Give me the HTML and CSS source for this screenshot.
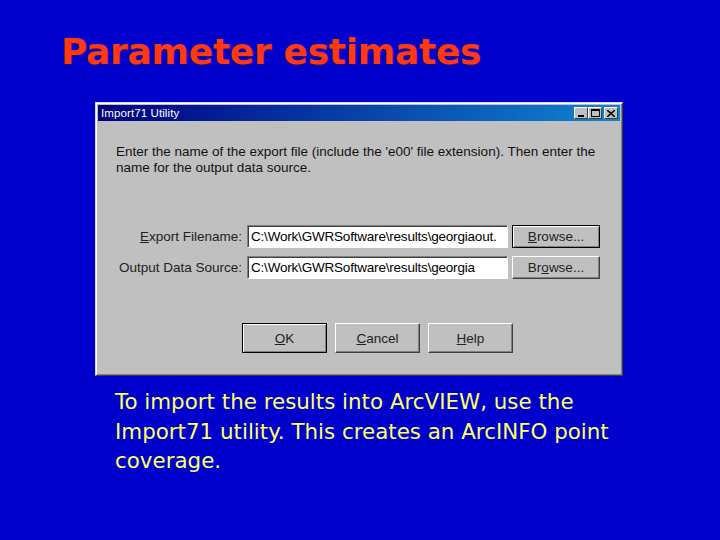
FILE: index.html
```html
<!DOCTYPE html>
<html lang="en">
<head>
    <meta charset="UTF-8">
    <title>Parameter estimates</title>
    <link rel="stylesheet" href="styles.css">
</head>
<body>
<div class="slide">
    <h1 class="slide-title">Parameter estimates</h1>

    <!-- Import71 dialog screenshot -->
    <div class="window">
        <div class="titlebar">
            <span class="titlebar-text">Import71 Utility</span>
            <div class="titlebar-buttons">
                <span class="tb-btn"><svg width="8" height="7" viewBox="0 0 8 7"><rect x="1" y="5" width="6" height="2" fill="#000"/></svg></span>
                <span class="tb-btn"><svg width="9" height="8" viewBox="0 0 9 8"><rect x="0.5" y="0.5" width="8" height="7" fill="none" stroke="#000"/><rect x="0" y="0" width="9" height="2" fill="#000"/></svg></span>
                <span class="tb-btn tb-close"><svg width="8" height="7" viewBox="0 0 8 7"><path d="M0 0 L8 7 M8 0 L0 7" stroke="#000" stroke-width="1.6"/></svg></span>
            </div>
        </div>
        <div class="window-body">
            <p class="intro">Enter the name of the export file (include the 'e00' file extension). Then enter the name for the output data source.</p>

            <div class="field-grid">
                <label class="field-label"><u>E</u>xport Filename:</label>
                <div class="textbox">C:\Work\GWRSoftware\results\georgiaout.</div>
                <button class="win-btn focused"><u>B</u>rowse...</button>

                <label class="field-label">Output Data Source:</label>
                <div class="textbox">C:\Work\GWRSoftware\results\georgia</div>
                <button class="win-btn">Br<u>o</u>wse...</button>
            </div>

            <div class="actions">
                <button class="win-btn action default"><u>O</u>K</button>
                <button class="win-btn action"><u>C</u>ancel</button>
                <button class="win-btn action"><u>H</u>elp</button>
            </div>
        </div>
    </div>

    <p class="caption">To import the results into ArcVIEW, use the Import71 utility. This creates an ArcINFO point coverage.</p>
</div>
</body>
</html>
```

FILE: styles.css
```css
/* Slide canvas */
body {
    margin: 0;
    background-color: #0000cc;
}
.slide {
    width: 720px;
    height: 540px;
    box-sizing: border-box;
    padding: 28px 0 0 0;
    background-color: #0000cc;
    overflow: hidden;
}
.slide-title {
    margin: 0 0 0 61px;
    font-family: "DejaVu Sans", Verdana, sans-serif;
    font-weight: bold;
    font-size: 36px;
    line-height: 48px;
    color: #ff3a12;
    text-shadow: 1px 1px 0 #2a0a70;
    letter-spacing: -0.3px;
}

/* Dialog window */
.window {
    width: 528px;
    height: 274px;
    box-sizing: border-box;
    margin: 26px 0 0 95px;
    background-color: #c0c0c0;
    border-top: 1px solid #dcdcdc;
    border-left: 1px solid #dcdcdc;
    border-right: 1px solid #404040;
    border-bottom: 1px solid #404040;
    box-shadow: inset 1px 1px 0 #ffffff, inset -1px -1px 0 #808080;
    padding: 2px;
    font-family: "Liberation Sans", Arial, sans-serif;
    color: #000;
}
.titlebar {
    height: 16px;
    display: flex;
    align-items: center;
    justify-content: space-between;
    padding: 0 2px 0 3px;
    background: linear-gradient(to right, #000080, #1084d0);
}
.titlebar-text {
    color: #ffffff;
    font-size: 11.5px;
    letter-spacing: 0.1px;
}
.titlebar-buttons {
    display: flex;
}
.tb-btn {
    width: 12px;
    height: 10px;
    display: flex;
    align-items: center;
    justify-content: center;
    background-color: #c0c0c0;
    border-top: 1px solid #ffffff;
    border-left: 1px solid #ffffff;
    border-right: 1px solid #404040;
    border-bottom: 1px solid #404040;
}
.tb-close {
    margin-left: 2px;
}
.window-body {
    padding: 23px 18px 0 18px;
}
.intro {
    margin: 0;
    font-size: 13.5px;
    line-height: 16px;
    color: #111;
}

/* Filename rows */
.field-grid {
    margin-top: 49px;
    display: grid;
    grid-template-columns: 127px 261px 88px;
    column-gap: 4px;
    row-gap: 8px;
    align-items: center;
}
.field-label {
    text-align: right;
    font-size: 13.5px;
    color: #222;
    padding-right: 1px;
    white-space: nowrap;
}
.textbox {
    height: 23px;
    box-sizing: border-box;
    padding: 3px 2px 0 3px;
    background-color: #ffffff;
    border-top: 1px solid #808080;
    border-left: 1px solid #808080;
    border-right: 1px solid #ffffff;
    border-bottom: 1px solid #ffffff;
    box-shadow: inset 1px 1px 0 #404040;
    font-size: 13.5px;
    letter-spacing: -0.2px;
    white-space: nowrap;
    overflow: hidden;
}
.win-btn {
    height: 23px;
    box-sizing: border-box;
    margin: 0;
    padding: 0;
    background-color: #c0c0c0;
    border-top: 1px solid #ffffff;
    border-left: 1px solid #ffffff;
    border-right: 1px solid #404040;
    border-bottom: 1px solid #404040;
    box-shadow: inset -1px -1px 0 #808080;
    font-family: "Liberation Sans", Arial, sans-serif;
    font-size: 13.5px;
    color: #222;
}
.win-btn.focused,
.win-btn.default {
    border: 1px solid #000000;
    box-shadow: inset 1px 1px 0 #ffffff, inset -1px -1px 0 #808080;
}

/* OK / Cancel / Help */
.actions {
    margin-top: 44px;
    margin-left: 126px;
    display: flex;
    gap: 8px;
}
.win-btn.action {
    width: 85px;
    height: 30px;
}

/* Caption under the screenshot */
.caption {
    margin: 11px 0 0 115px;
    width: 505px;
    font-family: "DejaVu Sans", Tahoma, sans-serif;
    font-size: 21.4px;
    line-height: 29.5px;
    color: #ffff66;
}
```
